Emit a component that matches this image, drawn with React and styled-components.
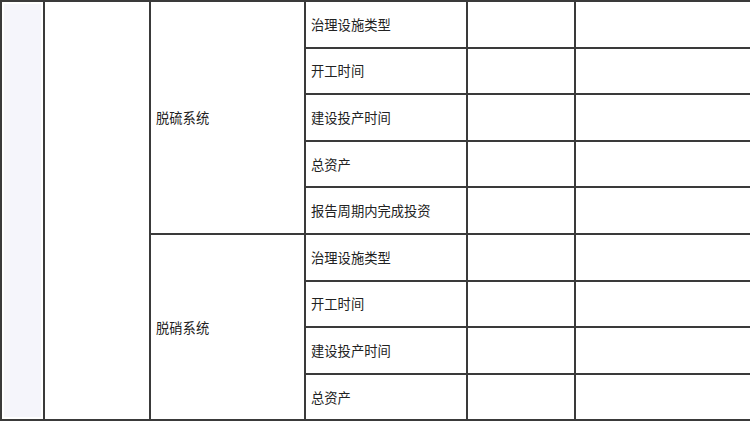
import React from 'react'
import styled, { createGlobalStyle } from 'styled-components';

const Global = createGlobalStyle`
    html, body {
        margin: 0;
        padding: 0;
        background: #ffffff;
        overflow: hidden;
    }
`

const colonne = [43, 106, 155, 162, 108, 176];

const groups = [
    {
        nome: "脱硫系统",
        voci: ["治理设施类型", "开工时间", "建设投产时间", "总资产", "报告周期内完成投资"]
    },
    {
        nome: "脱硝系统",
        voci: ["治理设施类型", "开工时间", "建设投产时间", "总资产"]
    }
];

function App() {
    const totale = groups.reduce((n, g) => n + g.voci.length, 0);

    return (
        <>
            <Global />
            <Table>
                <colgroup>
                    {colonne.map((w, i) => <Colonna key={i} $w={w} />)}
                </colgroup>
                <tbody>
                    {groups.map((g, gi) =>
                        g.voci.map((v, i) => (
                            <Riga key={gi + "-" + i}>
                                {gi === 0 && i === 0 && (
                                    <>
                                        <Laterale rowSpan={totale} />
                                        <Campo rowSpan={totale} />
                                    </>
                                )}
                                {i === 0 && <Campo rowSpan={g.voci.length}>{g.nome}</Campo>}
                                <Campo>{v}</Campo>
                                <Campo />
                                <Campo />
                            </Riga>
                        ))
                    )}
                </tbody>
            </Table>
        </>
    )
}

export default App

const Table = styled.table`
    border-collapse: collapse;
    table-layout: fixed;
    width: 750px;
    font-family: "Noto Sans CJK SC", "Liberation Serif", serif;
    font-size: 13.3px;
    color: #222222;
`
const Colonna = styled.col`
    width: ${props => props.$w}px;
`
const Riga = styled.tr`
    height: 46.6px;
`
const Campo = styled.td`
    border: 2px solid #3a3a3a;
    padding: 0 5px;
    text-align: left;
    vertical-align: middle;
    white-space: nowrap;
`
const Laterale = styled(Campo)`
    background: #f5f5fb;
    box-shadow: inset 0 0 0 2px #ffffff;
    padding: 0;
`
